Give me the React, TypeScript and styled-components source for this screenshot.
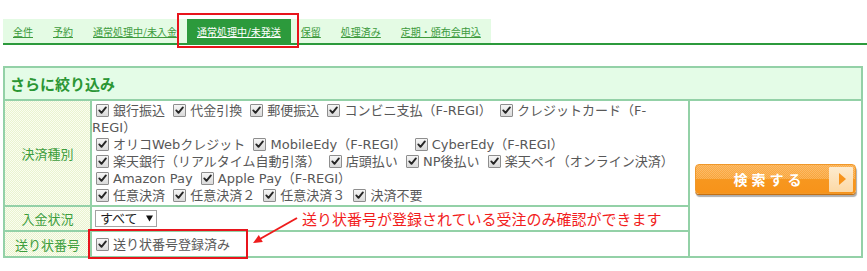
import React from "react";
import styled, { createGlobalStyle } from "styled-components";

const GlobalStyle = createGlobalStyle`
  html, body { margin: 0; padding: 0; background: #fff; }
  body { font-family: "DejaVu Sans", "Noto Sans CJK JP", sans-serif; }
`;

const Page = styled.div`
  width: 867px;
  height: 271px;
  padding: 19px 0 0 3px;
  box-sizing: border-box;
  overflow: hidden;
`;

const TabNav = styled.nav`
  display: flex;
  border-bottom: 2px solid #2c9a3c;
`;

const TabList = styled.ul`
  display: flex;
  margin: 0;
  padding: 0;
  list-style: none;
  background: #e4fbe4;
  height: 24px;
`;

const Tab = styled.li<{ $active?: boolean }>`
  position: relative;
  display: flex;
  align-items: center;
  padding: 0 10px;
  font-family: "Noto Sans CJK JP", sans-serif;
  font-size: 10px;
  color: ${(p) => (p.$active ? "#ffffff" : "#3c9a3c")};
  background: ${(p) => (p.$active ? "#2c9a3c" : "transparent")};
  text-decoration: underline;
  white-space: nowrap;
`;

const TabHighlight = styled.span`
  position: absolute;
  top: -6px;
  left: -10px;
  right: -8px;
  bottom: -5px;
  border: 2px solid #e8141c;
  pointer-events: none;
`;

const FilterBox = styled.section`
  margin-top: 21px;
  width: 860px;
  box-sizing: border-box;
  border: 2px solid #93d1a7;
  background: #93d1a7;
  display: grid;
  grid-template-columns: 85px 596px 171px;
  grid-template-rows: 31px 104px 23px 24px;
  gap: 2px;
`;

const Header = styled.h2`
  grid-column: 1 / -1;
  margin: 0;
  padding-left: 5px;
  display: flex;
  align-items: center;
  background: #e4fce7;
  font-family: "Noto Sans CJK JP", sans-serif;
  font-size: 15px;
  font-weight: bold;
  color: #2b9634;
`;

const Label = styled.div`
  display: flex;
  align-items: center;
  justify-content: center;
  background: repeating-conic-gradient(#e9f3cf 0 25%, #fafdf0 0 50%) 0 0 / 2px 2px;
  font-family: "Noto Sans CJK JP", sans-serif;
  font-size: 13px;
  color: #3d9e3d;
`;

const Cell = styled.div<{ $center?: boolean }>`
  position: relative;
  background: #fff;
  padding: ${(p) => (p.$center ? "0" : "1px 0 0")};
  display: ${(p) => (p.$center ? "flex" : "block")};
  align-items: center;
  font-size: 13px;
  line-height: 17px;
  color: #585858;
  white-space: nowrap;
`;

const ButtonCell = styled.div`
  grid-column: 3;
  grid-row: 2 / span 3;
  background: #fff;
  display: flex;
  align-items: center;
  justify-content: center;
`;

const Box = styled.span`
  display: inline-block;
  width: 13px;
  height: 13px;
  margin: 0 4px 0 4px;
  vertical-align: -2px;
  box-sizing: border-box;
  border: 1px solid #8e8e8e;
  border-radius: 1px;
  background: linear-gradient(#f6f6f6, #dadada);
  svg { display: block; }
`;

const CheckBox = () => (
  <Box role="checkbox" aria-checked="true">
    <svg width="11" height="11" viewBox="0 0 11 11">
      <path d="M2.3 5.4 L4.5 7.8 L8.9 2.4" fill="none" stroke="#262626" strokeWidth="1.9" strokeLinecap="round" strokeLinejoin="round" />
    </svg>
  </Box>
);

const Item = ({ children }: { children: React.ReactNode }) => (
  <>
    <CheckBox />
    {children}{" "}
  </>
);

const Select = styled.div`
  display: inline-flex;
  align-items: center;
  justify-content: space-between;
  margin-left: 3px;
  width: 62px;
  height: 17px;
  box-sizing: border-box;
  padding: 0 3px 0 4px;
  border: 1px solid #a3a3a3;
  background: #fff;
  color: #1e1e1e;
  font-size: 13px;
  line-height: 15px;
`;

const Callout = styled.span`
  position: absolute;
  left: 210px;
  top: -23px;
  font-family: "Noto Sans CJK JP", sans-serif;
  font-size: 15px;
  line-height: 20px;
  color: #f21d1d;
`;

const CalloutArrow = styled.svg`
  position: absolute;
  left: 155px;
  top: -20px;
  overflow: visible;
`;

const RedFrame = styled.span`
  position: absolute;
  left: -4px;
  top: -3px;
  width: 160px;
  height: 30px;
  box-sizing: border-box;
  border: 2px solid #e8141c;
  pointer-events: none;
`;

const SearchButton = styled.button`
  position: relative;
  display: flex;
  align-items: center;
  width: 161px;
  height: 30px;
  margin-top: 1px;
  padding: 0;
  box-sizing: border-box;
  border: 1px solid #f0982a;
  border-radius: 4px;
  background: linear-gradient(#fbad4a, #f9a336 50%, #f7971f 51%, #f7931a);
  box-shadow: 0 1px 0 #c47012, 1px 3px 1px rgba(0, 0, 0, 0.32);
  color: #fff;
  cursor: pointer;
  overflow: hidden;
  &::before {
    content: "";
    position: absolute;
    left: 0;
    right: 0;
    top: 0;
    height: 50%;
    background: repeating-conic-gradient(rgba(255, 255, 255, 0.2) 0 25%, transparent 0 50%) 0 0 / 2px 2px;
  }
`;

const ButtonText = styled.span`
  position: relative;
  flex: 1;
  padding-left: 14px;
  text-align: center;
  font-family: "Noto Sans CJK JP", sans-serif;
  font-size: 14px;
  font-weight: bold;
  letter-spacing: 4px;
`;

const ArrowBox = styled.span`
  position: relative;
  display: flex;
  align-items: center;
  justify-content: center;
  width: 24px;
  height: 25px;
  margin-right: 2px;
  background: linear-gradient(#fdebcf, #fcd9a6);
  border-radius: 1px;
`;

const Triangle = styled.span`
  width: 0;
  height: 0;
  border-top: 6px solid transparent;
  border-bottom: 6px solid transparent;
  border-left: 7px solid #f7941d;
  margin-left: 2px;
`;

const tabs = ["全件", "予約", "通常処理中/未入金", "通常処理中/未発送", "保留", "処理済み", "定期・頒布会申込"];

export default function App() {
  return (
    <>
      <GlobalStyle />
      <Page>
        <TabNav>
          <TabList>
            {tabs.map((t, i) => (
              <Tab key={t} $active={i === 3}>
                {t}
                {i === 3 && <TabHighlight />}
              </Tab>
            ))}
          </TabList>
        </TabNav>

        <FilterBox>
          <Header>さらに絞り込み</Header>

          <Label>決済種別</Label>
          <Cell>
            <Item>銀行振込</Item>
            <Item>代金引換</Item>
            <Item>郵便振込</Item>
            <Item>コンビニ支払（F-REGI）</Item>
            <CheckBox />クレジットカード（F-<br />REGI）<br />
            <Item>オリコWebクレジット</Item>
            <Item>MobileEdy（F-REGI）</Item>
            <Item>CyberEdy（F-REGI）</Item>
            <br />
            <Item>楽天銀行（リアルタイム自動引落）</Item>
            <Item>店頭払い</Item>
            <Item>NP後払い</Item>
            <Item>楽天ペイ（オンライン決済）</Item>
            <br />
            <Item>Amazon Pay</Item>
            <Item>Apple Pay（F-REGI）</Item>
            <br />
            <Item>任意決済</Item>
            <Item>任意決済２</Item>
            <Item>任意決済３</Item>
            <Item>決済不要</Item>
          </Cell>
          <ButtonCell>
            <SearchButton type="button">
              <ButtonText>検索する</ButtonText>
              <ArrowBox>
                <Triangle />
              </ArrowBox>
            </SearchButton>
          </ButtonCell>

          <Label>入金状況</Label>
          <Cell $center>
            <Select>
              すべて
              <svg width="7" height="7" viewBox="0 0 7 7">
                <path d="M0 0.5 H7 L3.5 6.5 Z" fill="#111" />
              </svg>
            </Select>
          </Cell>

          <Label>送り状番号</Label>
          <Cell $center>
            <CheckBox />送り状番号登録済み
            <RedFrame />
            <CalloutArrow width="55" height="36" viewBox="0 0 55 36">
              <line x1="50" y1="6" x2="12" y2="27.5" stroke="#ee1c1c" strokeWidth="2" />
              <polygon points="6,31 15.8,30.1 11.8,23.1" fill="#ee1c1c" />
            </CalloutArrow>
            <Callout>送り状番号が登録されている受注のみ確認ができます</Callout>
          </Cell>
        </FilterBox>
      </Page>
    </>
  );
}
